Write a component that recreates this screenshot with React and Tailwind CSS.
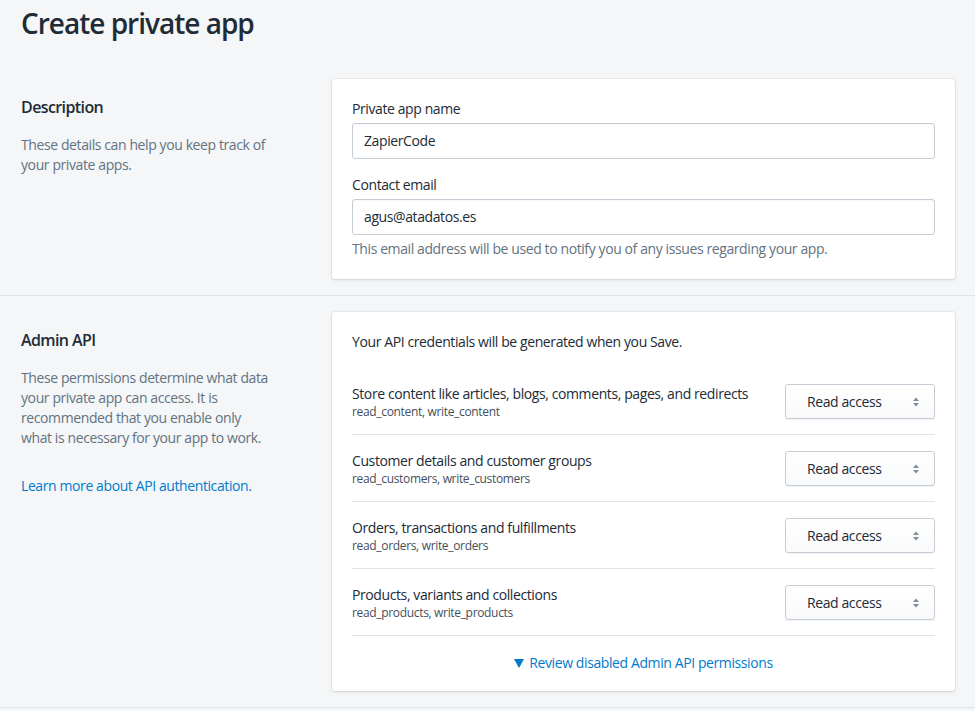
import React from 'react';

const permissions = [
  { title: 'Store content like articles, blogs, comments, pages, and redirects', scopes: 'read_content, write_content' },
  { title: 'Customer details and customer groups', scopes: 'read_customers, write_customers' },
  { title: 'Orders, transactions and fulfillments', scopes: 'read_orders, write_orders' },
  { title: 'Products, variants and collections', scopes: 'read_products, write_products' },
];

const SelectArrows = () => (
  <svg width="8" height="12" viewBox="0 0 8 12" className="text-[#7f8c99]">
    <path d="M4 1.5 L7 5 H1 Z" fill="currentColor" />
    <path d="M4 10.5 L1 7 H7 Z" fill="currentColor" />
  </svg>
);

const Select = () => (
  <div className="w-[150px] h-[35px] shrink-0 flex items-center justify-between pl-[21px] pr-[14px] rounded-[3px] border border-[#c4cdd5] bg-gradient-to-b from-white to-[#f9fafb] shadow-[0_1px_0_0_rgba(22,29,37,0.05)] text-sm text-[#212b36]">
    <span>Read access</span>
    <SelectArrows />
  </div>
);

const Input = ({ value }) => (
  <div className="h-[36px] flex items-center px-[11px] rounded-[3px] border border-[#c4cdd5] bg-white shadow-[inset_0_1px_0_0_rgba(99,115,129,0.05)] text-sm text-[#212b36]">
    {value}
  </div>
);

const Card = ({ children }) => (
  <div className="flex-1 bg-white rounded-[3px] p-5 shadow-[0_0_0_1px_rgba(63,63,68,0.05),0_1px_3px_0_rgba(63,63,68,0.15)]">
    {children}
  </div>
);

const App = () => {
  return (
    <div className="min-h-screen bg-[#f4f6f8] text-[#212b36] tracking-[-0.4px]" style={{ fontFamily: '"Open Sans", "Noto Sans", sans-serif' }}>
      {/* Title */}
      <div className="h-[63px] px-[21px] pt-[7px]">
        <h1 className="text-[28px] leading-[32px] font-semibold tracking-[-1px]">Create private app</h1>
      </div>

      {/* Description */}
      <div className="flex pl-[21px] pr-5 pt-4 pb-4">
        <div className="w-[311px] shrink-0 pr-[62px] pt-4">
          <h2 className="text-base leading-6 font-semibold tracking-[-0.6px]">Description</h2>
          <p className="mt-4 text-sm leading-5 text-[#637381]">
            These details can help you keep track of your private apps.
          </p>
        </div>
        <Card>
          <label className="block text-sm leading-5 mb-1">Private app name</label>
          <Input value="ZapierCode" />
          <label className="block text-sm leading-5 mt-4 mb-1">Contact email</label>
          <Input value="agus@atadatos.es" />
          <p className="mt-1 text-sm leading-5 text-[#637381]">
            This email address will be used to notify you of any issues regarding your app.
          </p>
        </Card>
      </div>

      {/* Admin API */}
      <div className="flex pl-[21px] pr-5 pt-4 pb-4 border-t border-[#dfe3e8] border-b">
        <div className="w-[311px] shrink-0 pr-[62px] pt-4">
          <h2 className="text-base leading-6 font-semibold tracking-[-0.6px]">Admin API</h2>
          <p className="mt-4 text-sm leading-5 text-[#637381]">
            These permissions determine what data your private app can access. It is recommended that you enable only what is necessary for your app to work.
          </p>
          <p className="mt-7 text-sm leading-5">
            <a className="text-[#007ace]">Learn more about API authentication.</a>
          </p>
        </div>
        <Card>
          <p className="text-sm leading-5">Your API credentials will be generated when you Save.</p>
          <div className="mt-4">
            {permissions.map((p) => (
              <div key={p.scopes} className="flex items-center justify-between pt-4 pb-[15px] border-b border-[#dfe3e8]">
                <div>
                  <div className="text-sm leading-5">{p.title}</div>
                  <div className="text-xs leading-[15px] tracking-[-0.33px] text-[#454f5b]">{p.scopes}</div>
                </div>
                <Select />
              </div>
            ))}
            <div className="pt-[17px] -mb-0.5 flex items-center justify-center gap-[5px] text-sm leading-5 text-[#007ace]">
              <svg width="10" height="9" viewBox="0 0 10 9">
                <path d="M0 0 H10 L5 9 Z" fill="currentColor" />
              </svg>
              <span>Review disabled Admin API permissions</span>
            </div>
          </div>
        </Card>
      </div>
    </div>
  );
};

export default App;
